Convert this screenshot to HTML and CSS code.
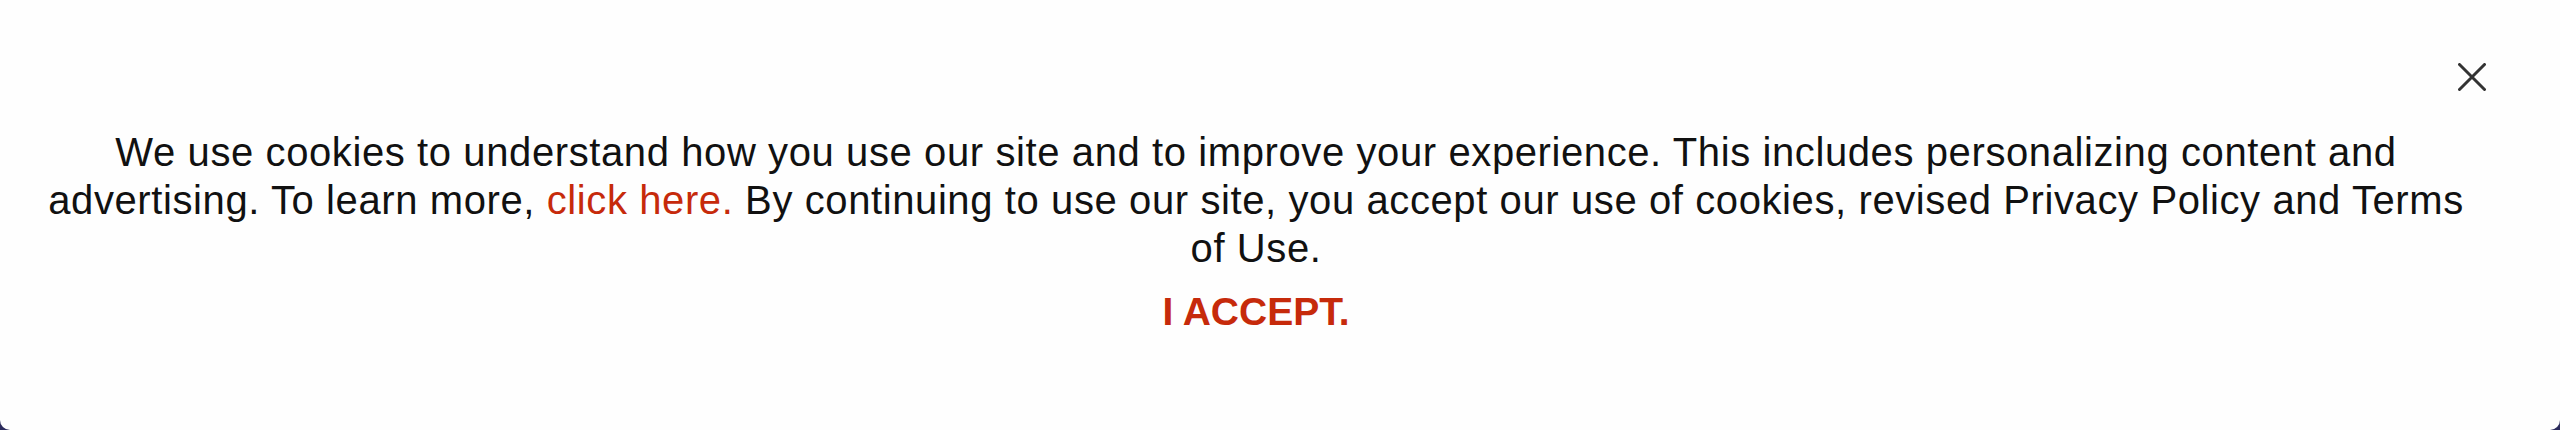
FILE: index.html
```html
<!DOCTYPE html>
<html lang="en">
<head>
<meta charset="utf-8">
<title>Cookie notice</title>
<link rel="stylesheet" href="styles.css">
</head>
<body>
<div class="banner">
  <div class="banner-top">
    <button class="close" aria-label="Close">
      <svg width="28" height="28" viewBox="0 0 28 28"><path d="M1.5 1.5 L26.5 26.5 M26.5 1.5 L1.5 26.5" stroke="#333" stroke-width="3" stroke-linecap="round" fill="none"/></svg>
    </button>
  </div>
  <div class="content">
    <p class="message">We use cookies to understand how you use our site and to improve your experience. This includes personalizing content and advertising. To learn more, <a class="link" href="#">click here.</a> By continuing to use our site, you accept our use of cookies, revised Privacy Policy and Terms of Use.</p>
    <a class="accept" href="#">I ACCEPT.</a>
  </div>
</div>
</body>
</html>
```
FILE: styles.css
```css
html, body {
  margin: 0;
  padding: 0;
  background: #2b2b5c;
}
.banner {
  height: 430px;
  background: #fefefe;
  border-radius: 0 0 10px 10px;
  display: flex;
  flex-direction: column;
  font-family: "Liberation Sans", Arial, sans-serif;
  color: #111;
}
.banner-top {
  display: flex;
  justify-content: flex-end;
  padding: 63px 74px 0 0;
  height: 28px;
}
.close {
  border: 0;
  background: none;
  padding: 0;
  width: 28px;
  height: 28px;
  cursor: pointer;
}
.close svg { display: block; }
.content {
  display: flex;
  flex-direction: column;
  align-items: center;
  padding: 0 94px 0 46px;
}
.message {
  margin: 37px 0 0;
  font-size: 40px;
  letter-spacing: 0.6px;
  line-height: 48px;
  text-align: center;
}
.link {
  color: #c62a0b;
  text-decoration: none;
}
.accept {
  margin-top: 16px;
  font-size: 39px;
  font-weight: 700;
  line-height: 48px;
  color: #c62a0b;
  text-decoration: none;
}
```
